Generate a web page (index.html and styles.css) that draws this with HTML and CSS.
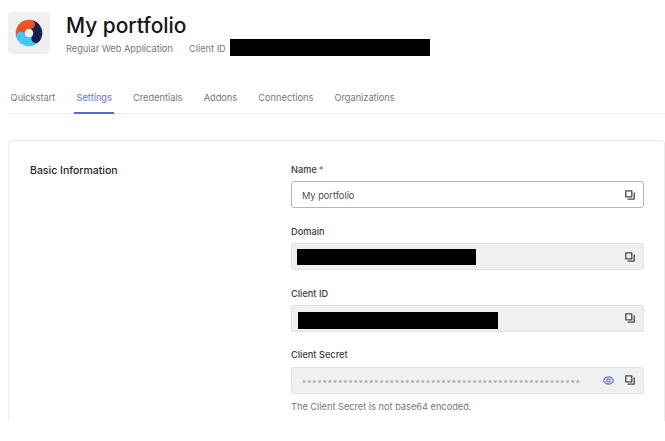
FILE: index.html
```html
<!DOCTYPE html>
<html lang="en">
<head>
<meta charset="utf-8">
<title>My portfolio</title>
<link rel="stylesheet" href="styles.css">
</head>
<body>
<svg class="defs" aria-hidden="true">
  <symbol id="copy" viewBox="0 0 10 10"><path d="M.8.8h6v6h-6zM9.2 2.9v6.2H3" fill="none" stroke="currentColor" stroke-width="1.3" stroke-linejoin="round" stroke-linecap="round"/></symbol>
</svg>
<header class="header">
  <div class="logo">
    <svg viewBox="0 0 28 28" width="28" height="28">
      <path id="sector" d="M14 14 1.5 18.55A13.3 13.3 0 0 1 16.3.9z" fill="#eb5424"/>
      <path d="M14 14 1.5 18.55A13.3 13.3 0 0 1 16.3.9z" fill="#16214d" transform="rotate(120 14 14)"/>
      <path d="M14 14 1.5 18.55A13.3 13.3 0 0 1 16.3.9z" fill="#44c7f4" transform="rotate(240 14 14)"/>
      <circle cx="15.5" cy="5.3" r="4.45" fill="#eb5424"/>
      <circle cx="15.5" cy="5.3" r="4.45" fill="#16214d" transform="rotate(120 14 14)"/>
      <circle cx="15.5" cy="5.3" r="4.45" fill="#44c7f4" transform="rotate(240 14 14)"/>
      <circle cx="14" cy="14" r="4.3" fill="#f0f0f0"/>
    </svg>
  </div>
  <div class="heading">
    <h1>My portfolio</h1>
    <div class="meta"><span class="type">Regular Web Application</span><span class="cid">Client ID</span><span class="redact head-redact"></span></div>
  </div>
</header>
<nav class="tabs">
  <a>Quickstart</a><a class="active">Settings</a><a>Credentials</a><a>Addons</a><a>Connections</a><a>Organizations</a>
</nav>
<main class="card">
  <h2>Basic Information</h2>
  <form class="fields">
    <div class="field"><label>Name<span class="star">*</span></label>
      <div class="box editable"><span class="value">My portfolio</span><svg class="copy"><use href="#copy"/></svg></div></div>
    <div class="field"><label>Domain</label>
      <div class="box"><span class="redact domain"></span><svg class="copy"><use href="#copy"/></svg></div></div>
    <div class="field"><label>Client ID</label>
      <div class="box"><span class="redact client"></span><svg class="copy"><use href="#copy"/></svg></div></div>
    <div class="field"><label>Client Secret</label>
      <div class="box"><span class="value dots">••••••••••••••••••••••••••••••••••••••••••••••••••••••</span>
        <svg class="eye" viewBox="0 0 11 9"><path d="M.6 4.5C2.7-.3 8.3-.3 10.4 4.5 8.3 9.3 2.7 9.3.6 4.5z"/><circle cx="5.5" cy="4.5" r="1.7"/></svg>
        <svg class="copy"><use href="#copy"/></svg></div>
      <p class="hint">The Client Secret is not base64 encoded.</p></div>
  </form>
</main>
</body>
</html>
```
FILE: styles.css
```css
* { box-sizing: border-box; }
body { margin: 0; padding: 12px 0 0 8px; height: 441px; overflow: hidden; background: #fff; font-family: Inter, sans-serif; font-size: 9.22px; color: #76777a; }
h1, h2, p { margin: 0; }
.defs { display: none; }
.header { display: flex; height: 43px; }
.logo { display: flex; align-items: center; justify-content: center; width: 42px; height: 42px; border-radius: 4px; background: #f0f0f0; }
.heading { margin-left: 16px; }
h1 { height: 27px; font-size: 20.9px; line-height: 28px; font-weight: 500; color: #151619; white-space: nowrap; }
.meta { display: flex; height: 17px; line-height: 19px; white-space: nowrap; }
.type { width: 123px; }
.cid { width: 41px; }
.redact { display: block; background: #000; }
.head-redact { width: 200px; height: 17px; }
.tabs { display: flex; gap: 16px; height: 34px; margin-top: 25px; border-bottom: 1px solid #ececee; }
.tabs a { height: 34px; padding: 0 2.6px; line-height: 36px; white-space: nowrap; }
.tabs .active { color: #5f70e6; border-bottom: 2px solid #5468e0; }
.card { display: flex; height: 281px; margin-top: 26px; padding: 22px 20px 0 21px; border: 1px solid #ececee; border-bottom: 0; border-radius: 4px 4px 0 0; overflow: hidden; }
h2 { width: 261px; font-size: 10.5px; line-height: 16px; font-weight: 500; color: #26282c; }
.fields { width: 353px; }
.field { height: 61.8px; }
label { display: block; height: 18.4px; line-height: 14px; font-weight: 500; color: #3c3e43; }
.star { margin-left: 2px; color: #72757a; }
.box { display: flex; align-items: center; height: 27px; padding: 0 8px 0 10px; border: 1px solid #e2e2e4; border-radius: 3px; background: #f0f0f0; color: #4c4e53; }
.editable { border-color: #b4b5b8; background: #fff; }
.value { white-space: nowrap; }
.editable .value { padding-top: 1px; }
.copy { width: 10px; height: 10px; margin-left: auto; color: #46474b; }
.domain { width: 179px; height: 16px; margin: 1px 0 0 -5px; }
.client { width: 200px; height: 17px; margin: 4px 0 0 -4px; }
.dots { padding-top: 2px; font-family: "Liberation Sans", sans-serif; font-size: 11.5px; letter-spacing: 1.14px; color: #b4b4b6; }
.eye { width: 11px; height: 9px; margin-left: auto; fill: none; stroke: #6074ec; stroke-width: 1.2; }
.eye + .copy { margin-left: 11px; }
.hint { margin-top: 5.4px; line-height: 15px; white-space: nowrap; }
```
